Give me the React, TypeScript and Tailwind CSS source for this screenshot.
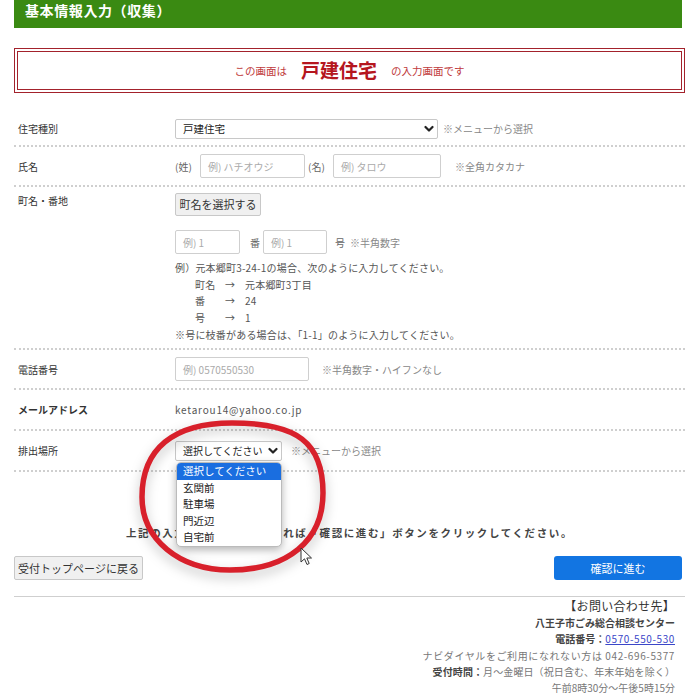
import React from 'react'

const font = { fontFamily: '"Noto Sans CJK JP", "Noto Sans", sans-serif' }

const Chevron = () => (
    <svg width="10" height="8" viewBox="0 0 10 8" className="shrink-0">
        <polyline points="1.5,2 5,5.5 8.5,2" fill="none" stroke="#222" strokeWidth="2.2" strokeLinecap="round" strokeLinejoin="round" />
    </svg>
)

const FakeSelect: React.FC<{ value: string; className: string }> = ({ value, className }) => (
    <div className={`flex items-center justify-between border border-[#c8c8c8] rounded-[2px] bg-white pl-[7px] pr-[3px] text-[#222] ${className}`}>
        <span>{value}</span>
        <Chevron />
    </div>
)

const TextBox: React.FC<{ placeholder: string; className: string }> = ({ placeholder, className }) => (
    <div className={`flex items-center border border-[#cfcfcf] rounded-[2px] bg-white px-[7px] text-[10px] text-[#aaa] ${className}`}>
        {placeholder}
    </div>
)

const Row: React.FC<{ label: string; bold?: boolean; className?: string; children: React.ReactNode }> = ({ label, bold, className, children }) => (
    <div className={`flex border-b-2 border-dotted border-[#cfcfcf] ${className ?? ''}`}>
        <div className={`w-[161px] shrink-0 pl-[4px] text-[10px] text-[#333] ${bold ? 'font-bold' : ''}`}>{label}</div>
        <div className="flex-1">{children}</div>
    </div>
)

export default function App() {
    return (
        <div className="relative w-[700px] h-[700px] overflow-hidden bg-white" style={font}>
            {/* header */}
            <div className="ml-[14px] w-[668px] h-[28px] bg-[#3a8a12] pl-[11px] text-[14px] font-bold leading-[20px] tracking-[0.6px] text-white">
                基本情報入力（収集）
            </div>

            {/* notice box */}
            <div className="ml-[14px] mt-[20px] w-[671px] h-[45px] border-[4px] border-double border-[#a3222c] flex items-center justify-center gap-[14px] text-[#c0393b]">
                <span className="text-[10.5px]">この画面は</span>
                <span className="text-[19px] font-bold text-[#b5161e]">戸建住宅</span>
                <span className="text-[10.5px]">の入力画面です</span>
            </div>

            {/* form */}
            <div className="ml-[14px] mt-[17px] w-[671px]">
                <Row label="住宅種別" className="h-[37px] items-center pt-[2px]">
                    <div className="flex items-center gap-[5px]">
                        <FakeSelect value="戸建住宅" className="w-[263px] h-[20px] text-[10.5px]" />
                        <span className="text-[10px] text-[#888]">※メニューから選択</span>
                    </div>
                </Row>

                <Row label="氏名" className="h-[40px] items-center">
                    <div className="flex items-center text-[10px] text-[#666]">
                        <span className="w-[25px]">(姓)</span>
                        <TextBox placeholder="例) ハチオウジ" className="w-[105px] h-[24px]" />
                        <span className="ml-[3px] w-[25px]">(名)</span>
                        <TextBox placeholder="例) タロウ" className="w-[108px] h-[24px]" />
                        <span className="ml-[14px] text-[#888]">※全角カタカナ</span>
                    </div>
                </Row>

                <Row label="町名・番地" className="h-[163px] pt-[6px]">
                    <div className="flex flex-col">
                        <div className="flex h-[23px] w-[86px] items-center justify-center border border-[#c8c8c8] rounded-[2px] bg-[#f0f0f0] text-[11px] text-[#333]">
                            町名を選択する
                        </div>
                        <div className="mt-[14px] flex items-center text-[10px] text-[#666]">
                            <TextBox placeholder="例) 1" className="w-[65px] h-[24px]" />
                            <span className="ml-[10px] w-[13px]">番</span>
                            <TextBox placeholder="例) 1" className="w-[64px] h-[24px]" />
                            <span className="ml-[8px]">号</span>
                            <span className="ml-[5px] text-[#888]">※半角数字</span>
                        </div>
                        <div className="mt-[6px] text-[10px] leading-[16.5px] tracking-[0.2px] text-[#555]">
                            <div>例）元本郷町3-24-1の場合、次のように入力してください。</div>
                            <div className="flex pl-[20px]"><span className="w-[30px]">町名</span><span className="w-[20px]">→</span><span>元本郷町3丁目</span></div>
                            <div className="flex pl-[20px]"><span className="w-[30px]">番</span><span className="w-[20px]">→</span><span>24</span></div>
                            <div className="flex pl-[20px]"><span className="w-[30px]">号</span><span className="w-[20px]">→</span><span>1</span></div>
                            <div className="mt-[1px]">※号に枝番がある場合は、「1-1」のように入力してください。</div>
                        </div>
                    </div>
                </Row>

                <Row label="電話番号" className="h-[40px] items-center">
                    <div className="flex items-center">
                        <TextBox placeholder="例) 0570550530" className="w-[134px] h-[24px]" />
                        <span className="ml-[13px] text-[10px] text-[#888]">※半角数字・ハイフンなし</span>
                    </div>
                </Row>

                <Row label="メールアドレス" bold className="h-[41px] items-center">
                    <div className="text-[10px] tracking-[0.8px] text-[#555]">ketarou14@yahoo.co.jp</div>
                </Row>

                <Row label="排出場所" className="h-[41px] items-center">
                    <div className="flex items-center gap-[9px]">
                        <FakeSelect value="選択してください" className="w-[107px] h-[20px] text-[10px]" />
                        <span className="text-[10px] text-[#888]">※メニューから選択</span>
                    </div>
                </Row>

                <div className="mt-[53px] h-[15px] text-center text-[10.5px] font-bold leading-[15px] tracking-[1.6px] text-[#444]">
                    上記の入力内容に誤りがなければ「確認に進む」ボタンをクリックしてください。
                </div>

                <div className="mt-[16px] flex items-center justify-between pr-[3px]">
                    <div className="flex h-[24px] w-[129px] items-center justify-center border border-[#c8c8c8] rounded-[2px] bg-[#f0f0f0] text-[11px] text-[#333]">
                        受付トップページに戻る
                    </div>
                    <div className="flex h-[24px] w-[128px] items-center justify-center rounded-[3px] bg-[#1275e2] text-[11px] text-white">
                        確認に進む
                    </div>
                </div>

                <div className="mt-[16px] border-t border-[#cfcfcf]" />

                <div className="flex flex-col items-end pr-[10px] text-right">
                    <div className="h-[18px] text-[12px] leading-[18px] tracking-[0.3px] text-[#333]">【お問い合わせ先】</div>
                    <div className="h-[16px] text-[10px] font-bold leading-[16px] text-[#444]">八王子市ごみ総合相談センター</div>
                    <div className="h-[16px] text-[10px] leading-[16px] text-[#444]">
                        <span className="font-bold">電話番号：</span>
                        <span className="tracking-[0.6px] text-[#3b47c8] underline">0570-550-530</span>
                    </div>
                    <div className="h-[17px] text-[10px] leading-[17px] tracking-[0.6px] text-[#777]">ナビダイヤルをご利用になれない方は 042-696-5377</div>
                    <div className="h-[16px] text-[10px] leading-[16px] tracking-[0.1px] text-[#777]">
                        <span className="font-bold text-[#444]">受付時間：</span>月～金曜日（祝日含む、年末年始を除く）
                    </div>
                    <div className="h-[16px] text-[10px] leading-[16px] text-[#777]">午前8時30分～午後5時15分</div>
                </div>
            </div>

            {/* open dropdown list */}
            <div className="absolute left-[176px] top-[462px] w-[106px] rounded-[5px] border border-[#bbb] bg-white text-[10.5px] leading-[16.5px] text-[#222] shadow-[0_3px_8px_rgba(0,0,0,0.3)] overflow-hidden">
                <div className="bg-[#1a6ee0] pl-[6px] text-white">選択してください</div>
                <div className="pl-[6px]">玄関前</div>
                <div className="pl-[6px]">駐車場</div>
                <div className="pl-[6px]">門近辺</div>
                <div className="pl-[6px]">自宅前</div>
            </div>

            {/* red hand-drawn annotation ring */}
            <svg className="pointer-events-none absolute left-0 top-0 drop-shadow-[0_5px_6px_rgba(0,0,0,0.25)]" width="700" height="700" viewBox="0 0 700 700">
                <path
                    d="M232 423 C297.5 423 323 442.6 323 493 C323 540.7 287.7 570 230 570 C179 570 142 539.3 142 497 C142 448.9 173.5 423 232 423 Z"
                    fill="none"
                    stroke="#d8202b"
                    strokeWidth="5.5"
                />
            </svg>

            {/* mouse cursor */}
            <svg className="pointer-events-none absolute left-[300px] top-[547px]" width="14" height="20" viewBox="0 0 14 20">
                <path d="M1 1 L1 15 L4.5 11.8 L7 17.5 L9.2 16.5 L6.8 11 L11.5 11 Z" fill="white" stroke="#333" strokeWidth="1" strokeLinejoin="round" />
            </svg>
        </div>
    )
}
